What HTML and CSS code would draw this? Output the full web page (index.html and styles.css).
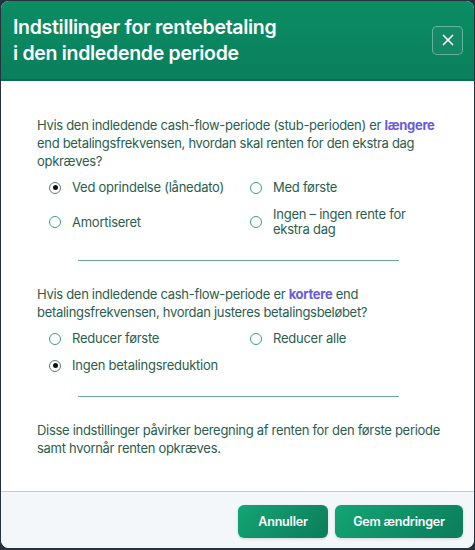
FILE: index.html
```html
<!DOCTYPE html>
<html lang="da">
<head>
    <meta charset="UTF-8">
    <meta name="viewport" content="width=device-width, initial-scale=1.0">
    <title>Indstillinger for rentebetaling</title>
    <link rel="stylesheet" href="styles.css">
</head>
<body>
    <div class="modal">
        <div class="modal-header">
            <h1>Indstillinger for rentebetaling<br>i den indledende periode</h1>
            <button class="close-btn" aria-label="Luk">
                <svg width="12" height="12" viewBox="0 0 12 12">
                    <path d="M1.5 1.5 L10.5 10.5 M10.5 1.5 L1.5 10.5" stroke="#fff" stroke-width="1.7" stroke-linecap="round"/>
                </svg>
            </button>
        </div>

        <div class="modal-body">
            <p class="question">Hvis den indledende cash-flow-periode (stub-perioden) er <span class="hl">længere</span> end betalingsfrekvensen, hvordan skal renten for den ekstra dag opkræves?</p>
            <div class="options">
                <label class="option"><span class="radio checked"></span><span>Ved oprindelse (lånedato)</span></label>
                <label class="option"><span class="radio"></span><span>Med første</span></label>
                <label class="option"><span class="radio"></span><span>Amortiseret</span></label>
                <label class="option"><span class="radio"></span><span>Ingen – ingen rente for<br>ekstra dag</span></label>
            </div>
            <hr class="divider">

            <p class="question">Hvis den indledende cash-flow-periode er <span class="hl">kortere</span> end betalingsfrekvensen, hvordan justeres betalingsbeløbet?</p>
            <div class="options">
                <label class="option"><span class="radio"></span><span>Reducer første</span></label>
                <label class="option"><span class="radio"></span><span>Reducer alle</span></label>
                <label class="option"><span class="radio checked"></span><span>Ingen betalingsreduktion</span></label>
            </div>
            <hr class="divider">

            <p class="note">Disse indstillinger påvirker beregning af renten for den første periode samt hvornår renten opkræves.</p>
        </div>

        <div class="modal-footer">
            <button class="btn">Annuller</button>
            <button class="btn btn-wide">Gem ændringer</button>
        </div>
    </div>
</body>
</html>
```

FILE: styles.css
```css
body {
    margin: 0;
    background-color: #26323d;
    font-family: Inter, "Noto Sans", sans-serif;
}

.modal {
    width: 473px;
    height: 547px;
    margin: 1px 1px 0 1px;
    background: white;
    border-radius: 8px;
    overflow: hidden;
    display: flex;
    flex-direction: column;
}

.modal-header {
    height: 78px;
    background: linear-gradient(180deg, #0b8d64 0%, #0a7f5b 100%);
    border-bottom: 2px solid #08714f;
    display: flex;
    align-items: center;
    justify-content: space-between;
    padding: 0 11px 0 12px;
}

.modal-header h1 {
    margin: 0;
    color: white;
    font-size: 19.5px;
    font-weight: 600;
    line-height: 26px;
    letter-spacing: -0.3px;
}

.close-btn {
    width: 31px;
    height: 29px;
    border: 1px solid rgba(255, 255, 255, 0.35);
    border-radius: 5px;
    background: rgba(255, 255, 255, 0.04);
    display: flex;
    align-items: center;
    justify-content: center;
    padding: 0;
}

.modal-body {
    flex: 1;
    padding: 35px 32px 0 36px;
    color: #2a5d4d;
}

.question, .note {
    margin: 0;
    font-size: 13px;
    line-height: 18px;
    letter-spacing: -0.3px;
}

.hl {
    color: #6a5ae0;
    font-weight: 700;
}

.options {
    display: grid;
    grid-template-columns: 201px 180px;
    row-gap: 12px;
    margin: 10px 0 0 12px;
}

.option {
    display: flex;
    align-items: center;
    gap: 11px;
    font-size: 13px;
    line-height: 15px;
    letter-spacing: -0.25px;
}

.radio {
    flex: none;
    width: 10px;
    height: 10px;
    border: 1.5px solid #3c9d84;
    border-radius: 50%;
    position: relative;
}

.radio.checked {
    border-color: #5c7f74;
}

.radio.checked::after {
    content: "";
    position: absolute;
    left: 2.5px;
    top: 2.5px;
    width: 5px;
    height: 5px;
    border-radius: 50%;
    background: #111;
}

.divider {
    width: 321px;
    margin: 23px 0 24px 41px;
    border: none;
    border-top: 1px solid #6fa795;
}

.modal-footer {
    height: 57px;
    background: #f4f7f9;
    border-top: 1px solid #b9d6cc;
    display: flex;
    justify-content: flex-end;
    align-items: flex-start;
    gap: 7px;
    padding: 13px 11px 0 0;
    box-sizing: border-box;
}

.btn {
    width: 90px;
    height: 33px;
    border: none;
    border-radius: 6px;
    background: linear-gradient(135deg, #14a574 0%, #0b7c59 100%);
    color: white;
    font-family: Inter, "Noto Sans", sans-serif;
    font-size: 12.5px;
    font-weight: 600;
    letter-spacing: -0.2px;
    box-shadow: 0 1px 3px rgba(0, 0, 0, 0.15);
}

.btn-wide {
    width: 128px;
}
```
